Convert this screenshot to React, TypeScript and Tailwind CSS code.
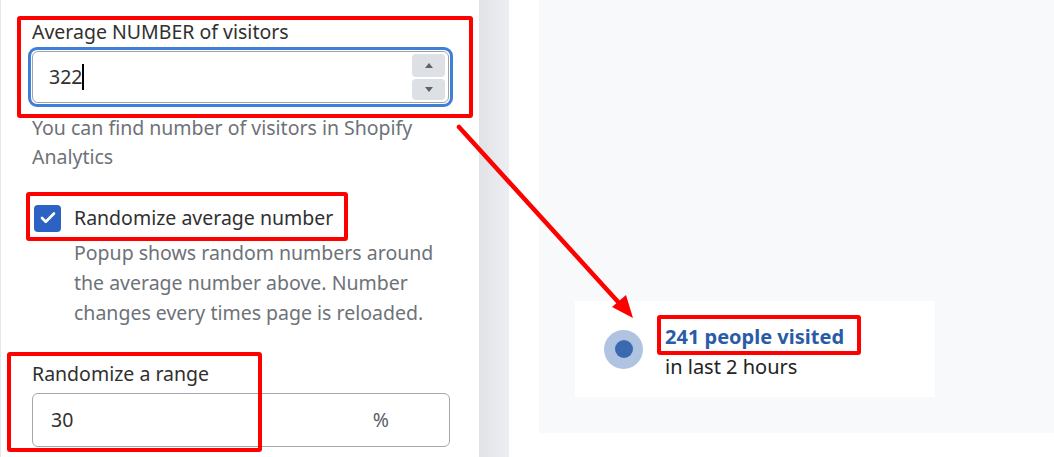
import { Check } from "lucide-react";

const font = { fontFamily: '"Noto Sans", "Open Sans", sans-serif' };

function Spinner() {
  return (
    <div className="flex flex-col gap-[2px] mr-[3px]">
      <button className="w-[33px] h-[23px] rounded-[4px] bg-[#dde0e4] flex items-center justify-center">
        <svg width="8" height="5" viewBox="0 0 8 5"><path d="M4 0 L8 5 L0 5 Z" fill="#5f6368" /></svg>
      </button>
      <button className="w-[33px] h-[21px] rounded-[4px] bg-[#dde0e4] flex items-center justify-center">
        <svg width="8" height="5" viewBox="0 0 8 5"><path d="M0 0 L8 0 L4 5 Z" fill="#5f6368" /></svg>
      </button>
    </div>
  );
}

function SettingsPanel() {
  return (
    <div className="w-[479px] shrink-0 bg-white border-l border-[#e5e7eb] pl-[31px] pr-[29px] flex flex-col text-[19.5px]">
      <label className="mt-[19px] leading-[26px] text-[#303030]">Average NUMBER of visitors</label>
      <div className="mt-[2px] ml-[-4px] mr-[-3px] h-[60px] shrink-0 border-[3px] border-[#3f7fd8] rounded-[9px] p-[1px] flex">
        <div className="flex-1 border border-[#9ea3a8] rounded-[6px] flex items-center pl-[16px]">
          <span className="text-[#303030] leading-none">322</span>
          <span className="w-[2px] h-[26px] bg-black" />
          <div className="flex-1" />
          <Spinner />
        </div>
      </div>
      <p className="mt-[6px] leading-[29px] text-[#6d7278]">You can find number of visitors in Shopify Analytics</p>
      <div className="mt-[32px] flex items-center gap-[13px] h-[30px] shrink-0">
        <span className="ml-[2px] w-[27px] h-[27px] rounded-[4px] bg-[#2c62c4] flex items-center justify-center">
          <Check size={18} strokeWidth={3.5} color="white" />
        </span>
        <span className="text-[#303030] leading-[30px]">Randomize average number</span>
      </div>
      <p className="ml-[42px] mt-[5px] leading-[30px] text-[#6d7278]">
        Popup shows random numbers around the average number above. Number changes every times page is reloaded.
      </p>
      <label className="mt-[33px] leading-[26px] text-[#303030]">Randomize a range</label>
      <div className="mt-[6px] h-[54px] shrink-0 border border-[#a3a8ae] rounded-[6px] flex items-center pl-[18px] pr-[60px]">
        <span className="text-[#303030]">30</span>
        <div className="flex-1" />
        <span className="text-[#5a6068]">%</span>
      </div>
    </div>
  );
}

function Preview() {
  return (
    <div className="flex-1 bg-white pl-[30px] flex flex-col">
      <div className="h-[433px] bg-[#f8f9fb] pl-[36px] pt-[301px]">
        <div className="w-[360px] h-[96px] bg-white flex items-center pl-[29px] gap-[22px]">
          <span className="w-[39px] h-[39px] rounded-full bg-[#b0c4e2] flex items-center justify-center">
            <span className="w-[18px] h-[18px] rounded-full bg-[#3a69b0]" />
          </span>
          <div className="flex flex-col text-[20px] leading-[30px] pt-[6px]">
            <span className="font-bold text-[#2a5ba6]">241 people visited</span>
            <span className="text-[#222]">in last 2 hours</span>
          </div>
        </div>
      </div>
    </div>
  );
}

export default function App() {
  return (
    <div className="relative w-[1054px] h-[457px] overflow-hidden flex" style={font}>
      <SettingsPanel />
      <div className="w-[30px] shrink-0 bg-linear-to-r from-[#e1e3e6] to-[#eceef1]" />
      <Preview />

      {/* annotations */}
      <div className="absolute left-[17px] top-[16px] w-[456px] h-[102px] border-4 border-[#ff0000] rounded-[3px]" />
      <div className="absolute left-[26px] top-[192px] w-[322px] h-[49px] border-4 border-[#ff0000] rounded-[3px]" />
      <div className="absolute left-[7px] top-[352px] w-[255px] h-[100px] border-4 border-[#ff0000] rounded-[3px]" />
      <div className="absolute left-[657px] top-[315px] w-[204px] h-[40px] border-4 border-[#ff0000] rounded-[3px]" />
      <svg className="absolute left-0 top-0 pointer-events-none" width="1054" height="457">
        <line x1="459" y1="127" x2="620" y2="304" stroke="#ff0000" strokeWidth="4.5" strokeLinecap="round" />
        <path d="M633 318 L612 307 L626 295 Z" fill="#ff0000" />
      </svg>
    </div>
  );
}
